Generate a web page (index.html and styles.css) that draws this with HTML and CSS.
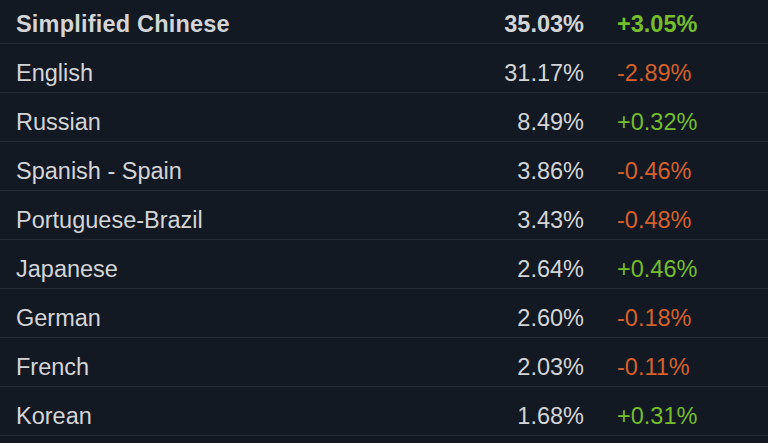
FILE: index.html
```html
<!DOCTYPE html>
<html lang="en">
  <head>
    <meta charset="UTF-8" />
    <meta name="viewport" content="width=device-width, initial-scale=1.0" />
    <title>Language Usage</title>
    <link rel="stylesheet" href="styles.css">
  </head>
  <body>
    <div class="stats-table">
      <div class="stats-row top">
        <span class="lang">Simplified Chinese</span>
        <span class="pct">35.03%</span>
        <span class="change up">+3.05%</span>
      </div>
      <div class="stats-row">
        <span class="lang">English</span>
        <span class="pct">31.17%</span>
        <span class="change down">-2.89%</span>
      </div>
      <div class="stats-row">
        <span class="lang">Russian</span>
        <span class="pct">8.49%</span>
        <span class="change up">+0.32%</span>
      </div>
      <div class="stats-row">
        <span class="lang">Spanish - Spain</span>
        <span class="pct">3.86%</span>
        <span class="change down">-0.46%</span>
      </div>
      <div class="stats-row">
        <span class="lang">Portuguese-Brazil</span>
        <span class="pct">3.43%</span>
        <span class="change down">-0.48%</span>
      </div>
      <div class="stats-row">
        <span class="lang">Japanese</span>
        <span class="pct">2.64%</span>
        <span class="change up">+0.46%</span>
      </div>
      <div class="stats-row">
        <span class="lang">German</span>
        <span class="pct">2.60%</span>
        <span class="change down">-0.18%</span>
      </div>
      <div class="stats-row">
        <span class="lang">French</span>
        <span class="pct">2.03%</span>
        <span class="change down">-0.11%</span>
      </div>
      <div class="stats-row">
        <span class="lang">Korean</span>
        <span class="pct">1.68%</span>
        <span class="change up">+0.31%</span>
      </div>
    </div>
  </body>
</html>
```

FILE: styles.css
```css
html,
body {
  margin: 0;
  background-color: #131922;
  overflow: hidden;
}

body {
  font-family: "Liberation Sans", Arial, sans-serif;
  font-size: 23.5px;
  color: #d3d5d7;
}

.stats-table {
  margin-top: -5px;
}

.stats-row {
  display: grid;
  grid-template-columns: 1fr 100px 151px;
  column-gap: 33px;
  height: 49px;
  padding-left: 16px;
  padding-top: 9px;
  line-height: 40px;
  box-sizing: border-box;
  border-bottom: 1px solid #252c35;
}

.stats-row.top {
  font-weight: bold;
}

.stats-row.top .lang {
  letter-spacing: 0.2px;
}

.pct {
  text-align: right;
}

.change.up {
  color: #75bd2c;
}

.change.down {
  color: #d5612b;
}
```
